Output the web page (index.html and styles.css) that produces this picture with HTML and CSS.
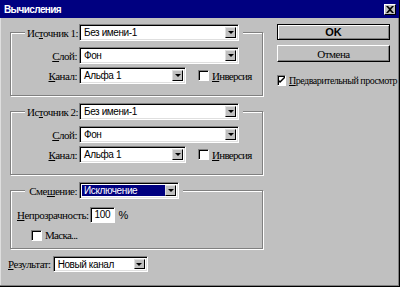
FILE: index.html
```html
<!DOCTYPE html>
<html lang="ru">
<head>
    <meta charset="UTF-8">
    <title>Вычисления</title>
    <link rel="stylesheet" href="styles.css">
</head>
<body>
    <div class="dialog">
        <div class="titlebar">
            <span class="title">Вычисления</span>
            <span class="close">
                <svg width="8" height="7" viewBox="0 0 8 7"><path d="M0 0h2l2 2 2-2h2L5 3.5 8 7H6L4 5 2 7H0l3-3.5z"/></svg>
            </span>
        </div>

        <div class="content">
            <div class="main">
                <fieldset class="group">
                    <legend class="row">
                        <span class="lbl lead">Ис<u>т</u>очник 1:</span>
                        <div class="combo w-long"><span class="value">Без имени-1</span><span class="arrow"></span></div>
                    </legend>
                    <div class="row">
                        <span class="lbl"><u>С</u>лой:</span>
                        <div class="combo w-long"><span class="value">Фон</span><span class="arrow"></span></div>
                    </div>
                    <div class="row">
                        <span class="lbl"><u>К</u>анал:</span>
                        <div class="combo w-mid"><span class="value">Альфа 1</span><span class="arrow"></span></div>
                        <span class="check"><span class="box"></span><u>И</u>нверсия</span>
                    </div>
                </fieldset>

                <fieldset class="group">
                    <legend class="row">
                        <span class="lbl lead">Ис<u>т</u>очник 2:</span>
                        <div class="combo w-long"><span class="value">Без имени-1</span><span class="arrow"></span></div>
                    </legend>
                    <div class="row">
                        <span class="lbl"><u>С</u>лой:</span>
                        <div class="combo w-long"><span class="value">Фон</span><span class="arrow"></span></div>
                    </div>
                    <div class="row">
                        <span class="lbl"><u>К</u>анал:</span>
                        <div class="combo w-mid"><span class="value">Альфа 1</span><span class="arrow"></span></div>
                        <span class="check"><span class="box"></span><u>И</u>нверсия</span>
                    </div>
                </fieldset>

                <fieldset class="group blend">
                    <legend class="row">
                        <span class="lbl lead">Сме<u>ш</u>ение:</span>
                        <div class="combo w-short focused"><span class="value">Исключение</span><span class="arrow"></span></div>
                    </legend>
                    <div class="row opacity">
                        <span class="lbl-free"><u>Н</u>епрозрачность:</span>
                        <div class="field">100</div>
                        <span class="unit">%</span>
                    </div>
                    <div class="row mask">
                        <span class="check"><span class="box"></span>Маска...</span>
                    </div>
                </fieldset>

                <div class="row result">
                    <span class="lbl-free"><u>Р</u>езультат:</span>
                    <div class="combo w-res"><span class="value">Новый канал</span><span class="arrow"></span></div>
                </div>
            </div>

            <div class="side">
                <button class="btn default">OK</button>
                <button class="btn">Отмена</button>
                <span class="check preview">
                    <span class="box">
                        <svg width="7" height="7" viewBox="0 0 7 7"><path d="M0 2l2 2 5-5v2l-5 5-2-2z"/></svg>
                    </span>
                    <span class="preview-text"><u>П</u>редварительный просмотр</span>
                </span>
            </div>
        </div>
    </div>
</body>
</html>
```

FILE: styles.css
```css
body {
    margin: 0;
    font-family: "Liberation Serif", serif;
    font-size: 11px;
    color: #000;
}
.dialog {
    width: 400px;
    height: 287px;
    box-sizing: border-box;
    background: #c0c0c0;
    border-right: 1px solid #000;
    border-bottom: 1px solid #000;
    box-shadow: inset -1px -1px 0 #808080, inset 1px 0 0 #dfdfdf;
}
.titlebar {
    height: 18px;
    background: #000080;
    display: flex;
    align-items: center;
    justify-content: space-between;
    padding: 0 3px 0 4px;
}
.title {
    color: #fff;
    font-family: "Liberation Sans", sans-serif;
    font-weight: bold;
    font-size: 10px;
    letter-spacing: -0.6px;
}
.close {
    width: 12px;
    height: 11px;
    box-sizing: border-box;
    background: #c0c0c0;
    border: 1px solid;
    border-color: #fff #000 #000 #fff;
    display: flex;
    align-items: center;
    justify-content: center;
}
.content {
    display: flex;
    padding: 6px 0 0 10px;
}
.main {
    width: 254px;
}
.group {
    width: 253px;
    box-sizing: border-box;
    margin: 0 0 7px 0;
    padding: 3px 0 11px 0;
    border: 1px solid #808080;
    box-shadow: 1px 1px 0 #fff, inset 1px 1px 0 #fff;
}
.group legend {
    margin-left: 14px;
    padding: 0 4px 0 2px;
    background: #c0c0c0;
}
.row {
    display: flex;
    align-items: center;
    height: 17px;
}
.row + .row {
    margin-top: 3px;
}
.lbl {
    width: 66px;
    margin-right: 2px;
    text-align: right;
    letter-spacing: -0.5px;
    white-space: nowrap;
}
.lbl.lead {
    width: 50px;
}
.lbl-free {
    margin-right: 2px;
    letter-spacing: -0.5px;
    white-space: nowrap;
}
.combo {
    display: flex;
    align-items: stretch;
    height: 17px;
    box-sizing: border-box;
    background: #fff;
    border: 1px solid;
    border-color: #808080 #fff #fff #808080;
    box-shadow: inset 1px 1px 0 #000, inset -1px -1px 0 #dfdfdf;
    padding: 2px;
}
.w-long { width: 160px; }
.w-mid { width: 107px; }
.w-short { width: 100px; }
.w-res { width: 95px; }
.value {
    flex: 1;
    padding-left: 2px;
    font-family: "Liberation Sans", sans-serif;
    font-size: 10px;
    line-height: 11px;
    letter-spacing: -0.4px;
    white-space: nowrap;
}
.focused .value {
    background: #000080;
    color: #fff;
}
.arrow {
    width: 11px;
    box-sizing: border-box;
    background: #c0c0c0;
    border: 1px solid;
    border-color: #dfdfdf #000 #000 #dfdfdf;
    display: flex;
    align-items: center;
    justify-content: center;
}
.arrow::after {
    content: "";
    border-top: 3px solid #000;
    border-left: 3px solid transparent;
    border-right: 3px solid transparent;
}
.check {
    display: flex;
    align-items: center;
    letter-spacing: -0.7px;
    white-space: nowrap;
}
.box {
    width: 11px;
    height: 11px;
    box-sizing: border-box;
    background: #fff;
    border: 1px solid;
    border-color: #808080 #fff #fff #808080;
    box-shadow: inset 1px 1px 0 #000;
    margin-right: 3px;
    display: flex;
    align-items: center;
    justify-content: center;
}
.row .check {
    margin-left: 12px;
}
.blend {
    margin-top: 1px;
    padding-bottom: 5px;
}
.row.opacity {
    margin-left: 6px;
    margin-top: 5px;
    height: 16px;
}
.field {
    width: 25px;
    height: 16px;
    box-sizing: border-box;
    background: #fff;
    border: 1px solid;
    border-color: #808080 #fff #fff #808080;
    box-shadow: inset 1px 1px 0 #000;
    padding: 1px 0 0 3px;
    font-family: "Liberation Sans", sans-serif;
    font-size: 10px;
    line-height: 12px;
    letter-spacing: -0.3px;
}
.unit {
    margin-left: 3px;
    font-family: "Liberation Sans", sans-serif;
}
.row.mask {
    margin-left: 8px;
    margin-top: 4px;
    height: 16px;
}
.result {
    margin-left: -2px;
    margin-top: 3px;
    height: 16px;
}
.result .combo {
    height: 16px;
}
.side {
    margin-left: 13px;
    display: flex;
    flex-direction: column;
    width: 113px;
}
.btn {
    height: 17px;
    margin: 0 0 5px 0;
    padding: 0;
    background: #c0c0c0;
    border: 1px solid;
    border-color: #fff #000 #000 #fff;
    box-shadow: inset -1px -1px 0 #808080;
    font-family: "Liberation Serif", serif;
    font-size: 11px;
    letter-spacing: -0.5px;
    color: #000;
}
.btn.default {
    height: 16px;
    border-color: #000;
    box-shadow: inset 1px 1px 0 #fff, inset -1px -1px 0 #808080;
    font-weight: bold;
    font-family: "Liberation Sans", sans-serif;
    letter-spacing: 0;
}
.preview {
    margin-top: 8px;
}
.preview-text {
    font-size: 10px;
    letter-spacing: -0.5px;
}
```
